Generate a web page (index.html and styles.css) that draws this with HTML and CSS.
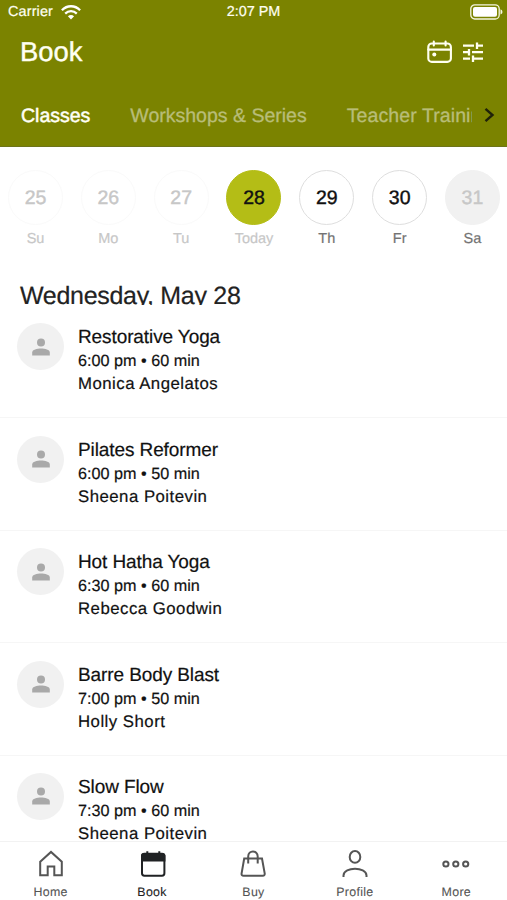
FILE: index.html
```html
<!DOCTYPE html>
<html lang="en">
<head>
<meta charset="utf-8">
<meta name="viewport" content="width=device-width, initial-scale=1">
<title>Book</title>
<link rel="stylesheet" href="styles.css">
</head>
<body>
<svg class="defs" width="0" height="0" aria-hidden="true">
  <symbol id="person" viewBox="0 0 18 18"><circle cx="9" cy="4.6" r="4"/><path d="M0.2 17.4V14.5C0.2 11.5 5 10.5 9 10.5S17.8 11.5 17.8 14.5V17.4Z"/></symbol>
</svg>
<div class="app">
  <header class="header">
    <div class="status">
      <div class="carrier"><span>Carrier</span>
        <svg width="20" height="15" viewBox="0 0 20 15" fill="none" stroke="#fff" stroke-width="2.3"><path d="M.9 5.2C6-.1 14-.1 19.1 5.2M4.2 8.6C7.5 5.4 12.5 5.4 15.8 8.6"/><path d="M6.9 11.2Q10 8.6 13.1 11.2L10 14.4Z" fill="#fff" stroke="none"/></svg>
      </div>
      <span class="clock">2:07 PM</span>
      <svg class="battery" width="33" height="16" viewBox="0 0 33 16"><rect x=".8" y=".8" width="28.4" height="14.2" rx="4" fill="none" stroke="#f5f6df" stroke-width="1.3"/><rect x="3" y="3" width="24" height="9.8" rx="2" fill="#fff"/><path d="M30.5 5.2Q32.5 6 32.5 7.9T30.5 10.6Z" fill="#f5f6df"/></svg>
    </div>
    <div class="titlebar">
      <h1>Book</h1>
      <div class="actions">
        <svg width="26" height="24" viewBox="0 0 26 24" fill="none" stroke="#fffff0" stroke-width="2.1" stroke-linecap="round"><rect x="1.3" y="3.5" width="22.6" height="18.4" rx="3.5"/><path d="M1.3 9.6H23.9M6.8 1.5V5.5M18.6 1.5V5.5"/><circle cx="7.3" cy="14.4" r="2" fill="#fffff0" stroke="none"/></svg>
        <svg width="20" height="20" viewBox="0 0 20 20" fill="none" stroke="#fffff0" stroke-width="2.3"><path d="M0 3.7H11M14 3.7H20M14 .5V6.9M0 10.2H6M6 7V13.4M9 10.2H20M0 16.7H7M10 16.7H20M10 13.5V19.9"/></svg>
      </div>
    </div>
    <nav class="tabs">
      <div class="tablist"><span class="tab tab-on">Classes</span><span class="tab">Workshops &amp; Series</span><span class="tab tab-last">Teacher Training</span></div>
      <svg width="11" height="16" viewBox="0 0 11 16" fill="none" stroke="#20230a" stroke-width="2.4"><path d="M1.5 1.8L8.5 8L1.5 14.2"/></svg>
    </nav>
  </header>
  <section class="week">
    <div class="day past"><span class="num">25</span><span class="name">Su</span></div>
    <div class="day past"><span class="num">26</span><span class="name">Mo</span></div>
    <div class="day past"><span class="num">27</span><span class="name">Tu</span></div>
    <div class="day today"><span class="num">28</span><span class="name">Today</span></div>
    <div class="day"><span class="num">29</span><span class="name">Th</span></div>
    <div class="day"><span class="num">30</span><span class="name">Fr</span></div>
    <div class="day closed"><span class="num">31</span><span class="name">Sa</span></div>
  </section>
  <h2>Wednesday, May 28</h2>
  <main class="list">
    <article class="class"><div class="avatar"><svg width="18" height="18"><use href="#person"/></svg></div><div><h3>Restorative Yoga</h3><p class="time">6:00 pm • 60 min</p><p class="teacher">Monica Angelatos</p></div></article>
    <article class="class"><div class="avatar"><svg width="18" height="18"><use href="#person"/></svg></div><div><h3>Pilates Reformer</h3><p class="time">6:00 pm • 50 min</p><p class="teacher">Sheena Poitevin</p></div></article>
    <article class="class"><div class="avatar"><svg width="18" height="18"><use href="#person"/></svg></div><div><h3>Hot Hatha Yoga</h3><p class="time">6:30 pm • 60 min</p><p class="teacher">Rebecca Goodwin</p></div></article>
    <article class="class"><div class="avatar"><svg width="18" height="18"><use href="#person"/></svg></div><div><h3>Barre Body Blast</h3><p class="time">7:00 pm • 50 min</p><p class="teacher">Holly Short</p></div></article>
    <article class="class"><div class="avatar"><svg width="18" height="18"><use href="#person"/></svg></div><div><h3>Slow Flow</h3><p class="time">7:30 pm • 60 min</p><p class="teacher">Sheena Poitevin</p></div></article>
  </main>
  <nav class="bottom">
    <div class="item"><svg viewBox="0 0 28 28"><path d="M3.2 11.8L14 1.9L24.8 11.8V25.2H17.3V16.5H10.7V25.2H3.2Z"/></svg><span>Home</span></div>
    <div class="item active"><svg viewBox="0 0 28 28"><rect x="4" y="3.7" width="22.4" height="22" rx="2.4"/><path class="solid" d="M3 5.5Q3 3.5 5 3.5H25.4Q27.4 3.5 27.4 5.5V11.5H3Z"/><path d="M9.3 1.3V5M21.3 1.3V5"/></svg><span>Book</span></div>
    <div class="item"><svg viewBox="0 0 28 28"><path d="M5.2 8.5H23L25.7 23.3Q26 25.7 23.7 25.7H4.6Q2.2 25.7 2.6 23.3ZM9.2 13.5V6.6C9.2-.2 18.7-.2 18.7 6.6V13.5"/></svg><span>Buy</span></div>
    <div class="item"><svg viewBox="0 0 28 28"><ellipse cx="14" cy="6.9" rx="5.3" ry="5.9"/><path d="M2.5 27V25.5C3 16.5 25 16.5 25.5 25.5V27"/></svg><span>Profile</span></div>
    <div class="item"><svg viewBox="0 0 28 28"><circle cx="3.9" cy="14" r="2.6"/><circle cx="13.8" cy="14" r="2.6"/><circle cx="23.7" cy="14" r="2.6"/></svg><span>More</span></div>
  </nav>
</div>
</body>
</html>
```
FILE: styles.css
```css
* { box-sizing: border-box; }
body { margin: 0; background: #fff; color: #111; font-family: "Liberation Sans", Arial, sans-serif; text-rendering: geometricPrecision; }
h1, h2, h3, p { margin: 0; font-weight: 400; }
svg { display: block; flex: none; }
.defs { position: absolute; }
.app { display: flex; flex-direction: column; width: 507px; height: 900px; overflow: hidden; }

.header { flex: none; height: 147px; background: #7b8300; border-bottom: 1px solid #6d741a; color: #fffff2; }
.status { display: grid; grid-template-columns: 1fr auto 1fr; align-items: center; height: 24px; padding: 0 4px 0 8px; font-size: 14.4px; -webkit-text-stroke: .2px; }
.carrier { display: flex; align-items: center; gap: 8px; letter-spacing: .15px; }
.clock { margin: 0 4px 0 0; }
.battery { justify-self: end; }
.titlebar { display: flex; justify-content: space-between; align-items: center; height: 56px; padding: 0 24px 0 20px; }
h1 { font-size: 27.4px; -webkit-text-stroke: .4px; }
.actions { display: flex; align-items: center; gap: 10px; }
.tabs { display: flex; align-items: center; justify-content: space-between; height: 70px; padding: 0 12px 0 21px; }
.tablist { display: flex; gap: 40px; width: 451px; overflow: hidden; white-space: nowrap; }
.tab { flex: none; color: #b8bd78; font-size: 19.5px; line-height: 24px; padding-top: 2px; -webkit-text-stroke: .3px; }
.tab-on { color: #fffff5; -webkit-text-stroke: .5px; }
.tab-last { letter-spacing: .1px; }

.week { flex: none; display: flex; justify-content: space-between; height: 129px; padding: 23px 7px 0 8px; }
.day { display: flex; flex-direction: column; align-items: center; width: 55px; }
.num { display: flex; align-items: center; justify-content: center; width: 55px; height: 55px; padding-top: 2px; border: 1px solid #dedede; border-radius: 50%; font-size: 19.5px; -webkit-text-stroke: .4px; color: #111; }
.name { margin-top: 5px; color: #737373; font-size: 14.5px; line-height: 18px; -webkit-text-stroke: .2px; }
.past .num { border-color: #fafafa; color: #c7c7c7; }
.past .name, .today .name { color: #c7c7c7; }
.today .num { border-color: #b4bd16; background: #b4bd16; }
.closed .num { border-color: #f1f1f1; background: #f1f1f1; color: #c7c7c7; }

h2 { flex: none; height: 29px; margin-bottom: 0; overflow: hidden; padding-left: 20px; font-size: 25px; line-height: 41px; letter-spacing: -.3px; color: #222; -webkit-text-stroke: .2px; }
.list { flex: 1; min-height: 0; overflow: hidden; }
.class { display: flex; gap: 14px; height: 112.4px; padding: 18px 17px 0; border-bottom: 1px solid #f6f6f6; }
.class:first-child { height: 113.4px; }
.class + .class { padding-top: 17.4px; }
.avatar { display: flex; flex: none; align-items: center; justify-content: center; width: 47px; height: 47px; border-radius: 50%; background: #f1f1f1; fill: #a9a9a9; }
h3 { margin-top: 2px; font-size: 19px; line-height: 25px; letter-spacing: -.1px; color: #111; -webkit-text-stroke: .2px; }
.time { font-size: 16.2px; line-height: 23px; -webkit-text-stroke: .2px; }
.teacher { font-size: 16.8px; line-height: 22px; letter-spacing: .48px; -webkit-text-stroke: .2px; }

.bottom { flex: none; display: grid; grid-template-columns: repeat(5, 1fr); height: 59px; border-top: 1px solid #f2f2f2; background: #fff; }
.item { display: flex; flex-direction: column; align-items: center; padding-top: 8px; color: #555; }
.item svg { width: 28px; height: 28px; fill: none; stroke: #555; stroke-width: 2; }
.item span { margin-top: 6px; font-size: 12.4px; line-height: 17px; letter-spacing: .3px; -webkit-text-stroke: .1px; }
.item.active { color: #222; }
.item.active svg { stroke: #202224; }
.item .solid { fill: #202224; stroke: none; }
```
